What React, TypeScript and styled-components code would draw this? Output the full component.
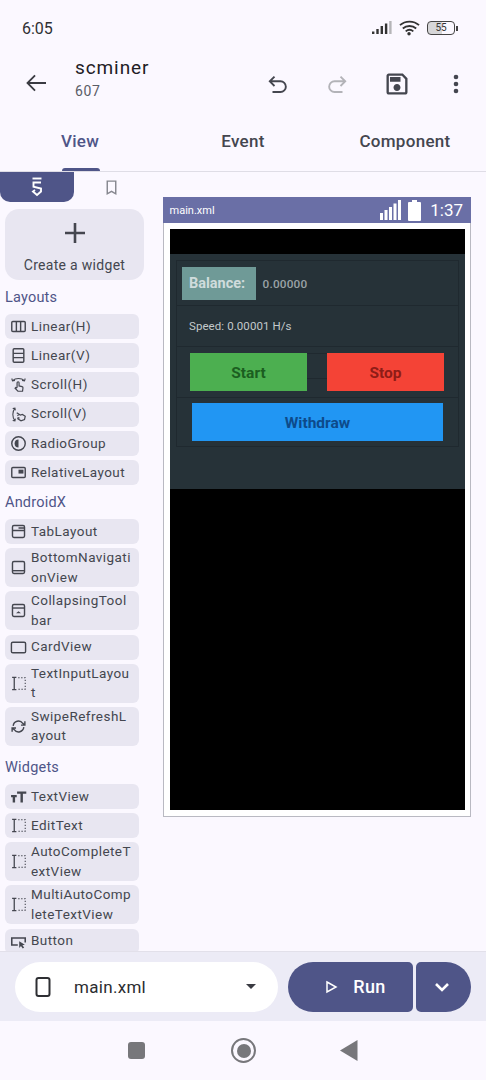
import React from 'react';
import styled, { createGlobalStyle } from 'styled-components';

const ink = '#44464f';

const GlobalStyle = createGlobalStyle`
  html, body {
    margin: 0;
    padding: 0;
    background: #fbf8ff;
  }

  * {
    box-sizing: border-box;
  }
`;

const Svg: React.FC<{ size: number; children: React.ReactNode; color?: string; sw?: number }> = ({
  size,
  children,
  color = ink,
  sw = 1.8,
}) => (
  <svg width={size} height={size} viewBox="0 0 24 24" fill="none" stroke={color} strokeWidth={sw} style={{ display: 'block', flexShrink: 0 }}>
    {children}
  </svg>
);

const icons: Record<string, React.ReactNode> = {
  linearH: (
    <>
      <rect x="2.500" y="5" width="19" height="14" rx="1.500" strokeWidth="2" />
      <path d="M9 5v14M15 5v14" strokeWidth="2" />
    </>
  ),
  linearV: (
    <>
      <rect x="4.500" y="2.500" width="15" height="19" rx="1.500" strokeWidth="2" />
      <path d="M4.500 9h15M4.500 15h15" strokeWidth="2" />
    </>
  ),
  scrollH: (
    <>
      <path d="M3.500 6.500c4.500-4 12.500-4 17 0M2.500 3.500l1 3.500 3.500-.8M21.500 3.500l-1 3.500-3.500-.8" strokeWidth="1.500" />
      <path d="M10 16.500V9.500a1.400 1.400 0 0 1 2.800 0V14l4.300 1.100a1.600 1.600 0 0 1 1.200 1.800l-.6 4.600h-6.500l-4-4.200 1-1 1.800.6" strokeWidth="1.700" />
    </>
  ),
  scrollV: (
    <>
      <path d="M7 3C3 8 3 16 7 21M3.800 3.500 7 3l.6 3.200M3.800 20.500 7 21l.6-3.200" strokeWidth="1.500" />
      <path d="M9.500 9.500l5 3.300 3-.8 4 2.500-1 4.500-5 2-4.500-3 .5-1.500 2 .5M12 12.500l-1.500 1.500" strokeWidth="1.700" />
    </>
  ),
  radio: (
    <>
      <circle cx="12" cy="12" r="9.500" strokeWidth="2" />
      <path d="M12 6.500a5.500 5.500 0 0 0 0 11z" fill={ink} stroke="none" />
    </>
  ),
  relative: (
    <>
      <rect x="2.500" y="5" width="19" height="14" rx="1.500" strokeWidth="2" />
      <rect x="12" y="8" width="7" height="5.500" fill={ink} stroke="none" />
    </>
  ),
  tab: (
    <>
      <rect x="3.500" y="3.500" width="17" height="17" rx="2" strokeWidth="2" />
      <path d="M3.500 10.500h17M12 7h8" strokeWidth="2" />
    </>
  ),
  bottomNav: (
    <>
      <rect x="3.500" y="3.500" width="17" height="17" rx="2" strokeWidth="2" />
      <path d="M3.500 16.500h17" strokeWidth="2" />
    </>
  ),
  collapsing: (
    <>
      <rect x="3.500" y="3.500" width="17" height="17" rx="2" strokeWidth="2" />
      <path d="M3.500 8.500h17" strokeWidth="2" />
      <path d="M8.500 16h7L12 13z" fill={ink} stroke="none" />
    </>
  ),
  card: <rect x="2" y="4.500" width="20" height="15" rx="2" strokeWidth="2" />,
  input: (
    <>
      <path d="M3 3.500h6M3 20.500h6M6 3.500v17" strokeWidth="1.800" />
      <path d="M11.500 4h10v16h-10" strokeWidth="1.500" strokeDasharray="2 2.200" />
    </>
  ),
  refresh: (
    <path d="M4.500 11a7.500 7.500 0 0 1 13.500-3.500L20.500 10M21 4.500v5.500h-5.500M19.500 13a7.500 7.500 0 0 1-13.500 3.500L3.500 14M3 19.500V14h5.500" strokeWidth="2" />
  ),
  text: <path d="M10 6.500h13M16.500 6.500v14M1.500 11.500h8M5.500 11.500v9" strokeWidth="3.400" />,
  button: (
    <>
      <path d="M11 17H2.500V7h19v6.500" strokeWidth="2.200" />
      <path d="M13 11.500V21l2.500-2.500 2.500 3.500 2-1.400-2.500-3.300 3.500-.8z" fill={ink} stroke="none" />
    </>
  ),
};

const sections = [
  {
    title: 'Layouts',
    space: 9,
    items: [
      ['linearH', 'Linear(H)'],
      ['linearV', 'Linear(V)'],
      ['scrollH', 'Scroll(H)'],
      ['scrollV', 'Scroll(V)'],
      ['radio', 'RadioGroup'],
      ['relative', 'RelativeLayout'],
    ],
  },
  {
    title: 'AndroidX',
    space: 9,
    items: [
      ['tab', 'TabLayout'],
      ['bottomNav', 'BottomNavigationView'],
      ['collapsing', 'CollapsingToolbar'],
      ['card', 'CardView'],
      ['input', 'TextInputLayout'],
      ['refresh', 'SwipeRefreshLayout'],
    ],
  },
  {
    title: 'Widgets',
    space: 13,
    items: [
      ['text', 'TextView'],
      ['input', 'EditText'],
      ['input', 'AutoCompleteTextView'],
      ['input', 'MultiAutoCompleteTextView'],
      ['button', 'Button'],
    ],
  },
];

const App: React.FC = () => (
  <Page>
    <GlobalStyle />
    <StatusBar>
      <Clock>6:05</Clock>
      <StatusIcons>
        <svg width="20" height="14" viewBox="0 0 20 14">
          <rect x="0" y="10.500" width="2.400" height="2.500" fill="#333" />
          <rect x="4.300" y="8" width="2.400" height="5" fill="#333" />
          <rect x="8.600" y="5" width="2.400" height="8" fill="#333" />
          <rect x="12.900" y="2.500" width="2.400" height="10.500" fill="#333" />
          <rect x="17.200" y="0" width="2.400" height="13" fill="#b5b5b8" />
        </svg>
        <svg width="21" height="16" viewBox="0 0 22 16" fill="none" stroke="#333" strokeWidth="1.900">
          <path d="M1 5c5.500-5 14.500-5 20 0M4 8.500c3.800-3.500 10.200-3.500 14 0M7 11.500c2.300-1.900 5.700-1.900 8 0" />
          <circle cx="10.500" cy="14" r="1.800" fill="#333" stroke="none" />
        </svg>
        <Battery>
          <BatteryBody>55</BatteryBody>
          <BatteryCap />
        </Battery>
      </StatusIcons>
    </StatusBar>

    <AppBar>
      <BackSlot>
        <Svg size={24} color="#3a3b42" sw={0}>
          <path fill="#3a3b42" d="M23 11H6.800l5.900-5.900L11.400 3.800 3.200 12l8.200 8.200 1.300-1.300L6.800 13H23z" />
        </Svg>
      </BackSlot>
      <TitleBlock>
        <Title>scminer</Title>
        <Subtitle>607</Subtitle>
      </TitleBlock>
      <Actions>
        <ActionSlot>
          <Svg size={24} color="#44464f" sw={1.9}>
            <path d="M8.500 14 3.800 9.300 8.500 4.600M3.800 9.300h10.700a5 5 0 0 1 0 10.700H6.500" />
          </Svg>
        </ActionSlot>
        <ActionSlot>
          <Svg size={24} color="#b3b3b8" sw={1.9}>
            <path d="M15.500 14l4.700-4.700L15.500 4.600M20.200 9.300H9.500a5 5 0 0 0 0 10.700h8" />
          </Svg>
        </ActionSlot>
        <ActionSlot>
          <Svg size={28} color="#44464f" sw={0}>
            <path
              fill="#44464f"
              d="M17 3H5c-1.110 0-2 .9-2 2v14c0 1.100.89 2 2 2h14c1.100 0 2-.9 2-2V7l-4-4zm2 16H5V5h11.170L19 7.830V19zm-7-7c-1.660 0-3 1.340-3 3s1.340 3 3 3 3-1.340 3-3-1.340-3-3-3zM6 6h9v4H6z"
            />
          </Svg>
        </ActionSlot>
        <ActionSlot>
          <Svg size={24} color="#44464f" sw={0}>
            <circle cx="12" cy="5" r="2.300" fill="#44464f" />
            <circle cx="12" cy="12" r="2.300" fill="#44464f" />
            <circle cx="12" cy="19" r="2.300" fill="#44464f" />
          </Svg>
        </ActionSlot>
      </Actions>
    </AppBar>

    <Tabs>
      <Tab $active>
        View
        <TabMark />
      </Tab>
      <Tab>Event</Tab>
      <Tab>Component</Tab>
    </Tabs>

    <Workspace>
      <Sidebar>
        <PaletteTabs>
          <PaletteTabOn>
            <svg width="14" height="20" viewBox="0 0 14 20" fill="none" stroke="#fff" strokeWidth="1.900">
              <path d="M2.500 1.500h9" />
              <path d="M11 5.500H3.500v4.200l7.500 1.800v3L7 18l-4-3.500 2-1.500" />
            </svg>
          </PaletteTabOn>
          <PaletteTabOff>
            <Svg size={17} color="#85868e" sw={2}>
              <path d="M6 3h12v18l-6-3.500L6 21z" />
            </Svg>
          </PaletteTabOff>
        </PaletteTabs>
        <CreateCard>
          <svg width="24" height="24" viewBox="0 0 24 24" stroke="#44464f" strokeWidth="2.600">
            <path d="M12 2v20M2 12h20" />
          </svg>
          <CreateLabel>Create a widget</CreateLabel>
        </CreateCard>
        {sections.map(({ title, space, items }) => (
          <React.Fragment key={title}>
            <SectionTitle $space={space}>{title}</SectionTitle>
            <ItemList>
              {items.map(([icon, label]) => (
                <Item key={label}>
                  <Svg size={17}>{icons[icon]}</Svg>
                  <ItemLabel>{label}</ItemLabel>
                </Item>
              ))}
            </ItemList>
          </React.Fragment>
        ))}
      </Sidebar>

      <Preview>
        <PreviewHeader>
          <PreviewName>main.xml</PreviewName>
          <svg width="22" height="20" viewBox="0 0 22 20" fill="#fff">
            <rect x="0" y="13" width="3" height="7" />
            <rect x="4.500" y="10" width="3" height="10" />
            <rect x="9" y="7" width="3" height="13" />
            <rect x="13.500" y="3.500" width="3" height="16.500" />
            <rect x="18" y="0" width="3" height="20" />
          </svg>
          <svg width="13" height="21" viewBox="0 0 13 21" fill="#fff">
            <path d="M4 0h5v2h3a1 1 0 0 1 1 1v17a1 1 0 0 1-1 1H1a1 1 0 0 1-1-1V3a1 1 0 0 1 1-1h3z" />
          </svg>
          <PreviewClock>1:37</PreviewClock>
        </PreviewHeader>
        <PreviewFrame>
          <Screen>
            <Panel>
              <BalanceRow>
                <BalanceLabel>Balance:</BalanceLabel>
                <BalanceValue>0.00000</BalanceValue>
              </BalanceRow>
              <SpeedRow>Speed: 0.00001 H/s</SpeedRow>
              <ButtonRow>
                <ActionButton $bg="#4caf50" $fg="#1b5e20">
                  Start
                </ActionButton>
                <Spacer />
                <ActionButton $bg="#f44336" $fg="#8e1c16">
                  Stop
                </ActionButton>
              </ButtonRow>
              <WithdrawRow>
                <ActionButton $bg="#2196f3" $fg="#0d4a8a">
                  Withdraw
                </ActionButton>
              </WithdrawRow>
            </Panel>
          </Screen>
        </PreviewFrame>
      </Preview>
    </Workspace>

    <BottomBar>
      <FilePicker>
        <svg width="16" height="22" viewBox="0 0 16 22" fill="none" stroke="#2e2f33" strokeWidth="2">
          <rect x="1.500" y="2" width="13" height="18" rx="2" />
        </svg>
        <FileName>main.xml</FileName>
        <Caret />
      </FilePicker>
      <RunButton>
        <svg width="13" height="14" viewBox="0 0 13 14" fill="none" stroke="#fff" strokeWidth="1.500">
          <path d="M2 2l9 5-9 5z" />
        </svg>
        Run
      </RunButton>
      <MoreButton>
        <svg width="16" height="10" viewBox="0 0 16 10" fill="none" stroke="#fff" strokeWidth="2.600">
          <path d="M2 2l6 6 6-6" />
        </svg>
      </MoreButton>
    </BottomBar>

    <NavBar>
      <NavSquare />
      <NavCircle>
        <NavDot />
      </NavCircle>
      <svg width="18" height="21" viewBox="0 0 18 21" fill="#77777b">
        <path d="M17.500 0v21L0 10.500z" />
      </svg>
    </NavBar>
  </Page>
);

const Page = styled.div`
  width: 486px;
  height: 1080px;
  display: flex;
  flex-direction: column;
  overflow: hidden;
  background: #fbf8ff;
  font-family: Roboto, 'Liberation Sans', sans-serif;
  color: ${ink};
`;

const StatusBar = styled.div`
  height: 50px;
  flex-shrink: 0;
  display: flex;
  align-items: center;
  justify-content: space-between;
  padding: 6px 28px 0 22px;
`;

const Clock = styled.div`
  font-size: 16px;
  color: #2f3033;
`;

const StatusIcons = styled.div`
  display: flex;
  align-items: center;
  gap: 7px;
`;

const Battery = styled.div`
  display: flex;
  align-items: center;
  gap: 1px;
`;

const BatteryBody = styled.div`
  width: 28px;
  height: 14px;
  border: 1px solid #444;
  border-radius: 4px;
  background: linear-gradient(90deg, #d6d6d8 55%, transparent 55%);
  font-size: 10px;
  line-height: 12px;
  text-align: center;
  color: #333;
`;

const BatteryCap = styled.div`
  width: 2px;
  height: 5px;
  background: #444;
`;

const AppBar = styled.div`
  height: 65px;
  flex-shrink: 0;
  display: flex;
  align-items: center;
`;

const BackSlot = styled.div`
  margin-left: 23px;
  width: 24px;
`;

const TitleBlock = styled.div`
  margin: -10px 0 0 28px;
  flex: 1;
  display: flex;
  flex-direction: column;
  gap: 2px;
`;

const Title = styled.div`
  font-size: 19px;
  line-height: 24px;
  letter-spacing: 0.9px;
  color: #1f2025;
`;

const Subtitle = styled.div`
  font-size: 14px;
  line-height: 18px;
  letter-spacing: 0.6px;
  color: #5a5c66;
`;

const Actions = styled.div`
  display: flex;
  align-items: center;
`;

const ActionSlot = styled.div`
  width: 59.500px;
  display: flex;
  justify-content: center;
  padding-top: 2px;
`;

const Tabs = styled.div`
  height: 57px;
  flex-shrink: 0;
  display: grid;
  grid-template-columns: 162px 162px 162px;
  border-bottom: 1px solid #dfdde6;
`;

const Tab = styled.div<{ $active?: boolean }>`
  position: relative;
  display: flex;
  align-items: center;
  justify-content: center;
  font-size: 17px;
  font-weight: 500;
  letter-spacing: 0.3px;
  padding: 0 ${({ $active }) => ($active ? 2 : 0)}px 4px 0;
  color: ${({ $active }) => ($active ? '#4f5588' : '#44464f')};
`;

const TabMark = styled.div`
  position: absolute;
  bottom: 0;
  left: 62px;
  width: 38px;
  height: 3px;
  border-radius: 3px 3px 0 0;
  background: #4f5588;
`;

const Workspace = styled.div`
  flex: 1;
  min-height: 0;
  display: flex;
  overflow: hidden;
`;

const Sidebar = styled.div`
  width: 163px;
  flex-shrink: 0;
  overflow: hidden;
`;

const PaletteTabs = styled.div`
  display: flex;
  width: 148px;
  height: 30px;
`;

const PaletteTabOn = styled.div`
  width: 74px;
  display: flex;
  align-items: center;
  justify-content: center;
  background: #4f5588;
  border-radius: 0 0 10px 10px;
`;

const PaletteTabOff = styled.div`
  width: 74px;
  display: flex;
  align-items: center;
  justify-content: center;
`;

const CreateCard = styled.div`
  margin: 7px 0 4px 5px;
  width: 139px;
  height: 71px;
  border-radius: 14px;
  background: #e8e6f1;
  display: flex;
  flex-direction: column;
  align-items: center;
  padding-top: 12px;
`;

const CreateLabel = styled.div`
  margin-top: 11px;
  font-size: 14px;
  line-height: 18px;
  letter-spacing: 0.3px;
`;

const SectionTitle = styled.div<{ $space: number }>`
  margin: ${({ $space }) => $space}px 0 0 5px;
  font-size: 14.500px;
  line-height: 18px;
  letter-spacing: 0.2px;
  color: #4f5588;
`;

const ItemList = styled.div`
  margin: 7px 0 0 5px;
  width: 134px;
  display: flex;
  flex-direction: column;
  gap: 4.200px;
`;

const Item = styled.div`
  min-height: 25px;
  border-radius: 6px;
  background: #e8e6f1;
  display: flex;
  align-items: center;
  gap: 4px;
  padding: 0 5px;
`;

const ItemLabel = styled.div`
  min-width: 0;
  flex: 1;
  font-size: 13.500px;
  line-height: 19.500px;
  letter-spacing: 0.45px;
  overflow-wrap: anywhere;
  color: #44464f;
`;

const Preview = styled.div`
  width: 308px;
  height: 620px;
  margin-top: 25px;
  display: flex;
  flex-direction: column;
  flex-shrink: 0;
`;

const PreviewHeader = styled.div`
  height: 26px;
  flex-shrink: 0;
  display: flex;
  align-items: center;
  gap: 6px;
  padding: 0 8px 0 6.500px;
  background: #6a6fa6;
  color: #fff;
`;

const PreviewName = styled.div`
  flex: 1;
  font-size: 11px;
`;

const PreviewClock = styled.div`
  font-size: 17px;
  margin-left: 3px;
`;

const PreviewFrame = styled.div`
  flex: 1;
  padding: 6px 5px 6px 6px;
  background: #fff;
  border: 1px solid #b9b9c2;
  border-top: 0;
`;

const Screen = styled.div`
  height: 100%;
  padding-top: 25px;
  background: #000;
`;

const Panel = styled.div`
  height: 235px;
  padding: 6px;
  background: #263238;
`;

const PanelRow = styled.div`
  border: 1px solid #1f292f;
  display: flex;
  align-items: center;
`;

const BalanceRow = styled(PanelRow)`
  height: 46px;
  padding-left: 5px;
`;

const BalanceLabel = styled.div`
  width: 74px;
  height: 33px;
  display: flex;
  align-items: center;
  padding: 1px 0 0 7px;
  background: #6f9a97;
  font-size: 14.500px;
  font-weight: 700;
  color: #cfdcdc;
`;

const BalanceValue = styled.div`
  margin: 1px 0 0 6.500px;
  font-size: 11.800px;
  font-weight: 500;
  letter-spacing: 0.2px;
  color: #9aa3a6;
`;

const SpeedRow = styled(PanelRow)`
  height: 41px;
  padding-left: 12px;
  border-top: 0;
  font-size: 11.500px;
  letter-spacing: 0.08px;
  color: #c3c9cb;
`;

const ButtonRow = styled(PanelRow)`
  height: 51px;
  padding: 0 14px 0 13px;
  border-top: 0;
`;

const Spacer = styled.div`
  width: 20px;
  height: 38px;
  flex-shrink: 0;
  background: linear-gradient(#1f292f, #1f292f) top / 100% 1px no-repeat,
    linear-gradient(#1f292f, #1f292f) 0 25px / 100% 1px no-repeat;
`;

const WithdrawRow = styled(PanelRow)`
  height: 49px;
  padding: 0 15px;
  border-top: 0;
`;

const ActionButton = styled.div<{ $bg: string; $fg: string }>`
  flex: 1;
  height: 38px;
  padding-top: 2px;
  display: flex;
  align-items: center;
  justify-content: center;
  background: ${({ $bg }) => $bg};
  color: ${({ $fg }) => $fg};
  font-size: 15.500px;
  font-weight: 700;
`;

const BottomBar = styled.div`
  height: 70px;
  flex-shrink: 0;
  display: flex;
  align-items: center;
  padding: 0 15px;
  background: #ecebf6;
  border-top: 1px solid #e2e0ea;
`;

const FilePicker = styled.div`
  width: 263px;
  height: 50px;
  margin-right: 10px;
  display: flex;
  align-items: center;
  padding: 0 22px 0 20px;
  border-radius: 25px;
  background: #fff;
`;

const FileName = styled.div`
  flex: 1;
  margin-left: 23px;
  font-size: 17px;
  letter-spacing: 0.3px;
  color: #2b2c30;
`;

const Caret = styled.div`
  width: 0;
  height: 0;
  border-left: 5px solid transparent;
  border-right: 5px solid transparent;
  border-top: 5px solid #3a3b42;
`;

const RunButton = styled.div`
  width: 125px;
  height: 50px;
  display: flex;
  align-items: center;
  justify-content: center;
  gap: 15px;
  padding-left: 10px;
  border-radius: 25px 5px 5px 25px;
  background: #4f5588;
  color: #fff;
  font-size: 18px;
  font-weight: 500;
  letter-spacing: 0.3px;
`;

const MoreButton = styled.div`
  width: 55px;
  height: 50px;
  margin-left: 3px;
  display: flex;
  align-items: center;
  justify-content: center;
  padding-right: 4px;
  border-radius: 5px 25px 25px 5px;
  background: #4f5588;
`;

const NavBar = styled.div`
  height: 59px;
  flex-shrink: 0;
  display: flex;
  align-items: center;
  padding-left: 128px;
  gap: 84px;
`;

const NavSquare = styled.div`
  width: 17px;
  height: 17px;
  margin-right: 2px;
  border-radius: 3px;
  background: #77777b;
`;

const NavCircle = styled.div`
  width: 25px;
  height: 25px;
  border: 2.500px solid #77777b;
  border-radius: 50%;
  display: flex;
  align-items: center;
  justify-content: center;
`;

const NavDot = styled.div`
  width: 14px;
  height: 14px;
  border-radius: 50%;
  background: #77777b;
`;

export default App;
